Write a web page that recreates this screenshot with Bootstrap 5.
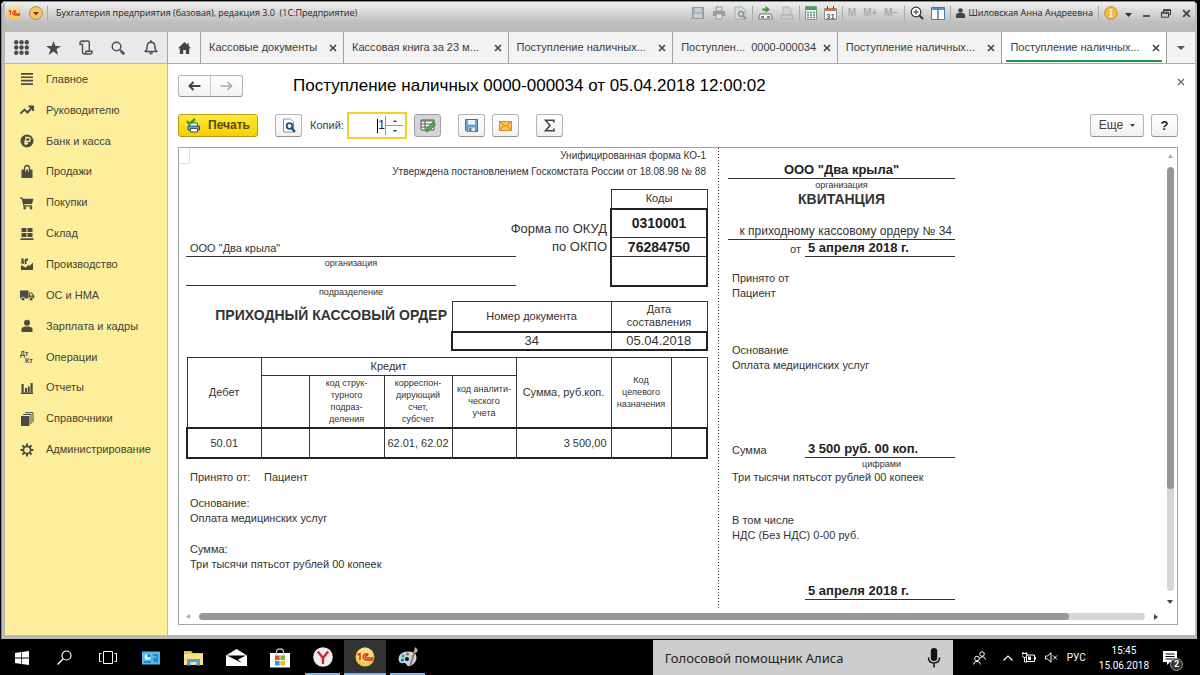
<!DOCTYPE html>
<html lang="ru">
<head>
<meta charset="utf-8">
<meta name="viewport" content="width=device-width, initial-scale=1">
<title>Поступление наличных 0000-000034</title>
<link href="https://cdn.jsdelivr.net/npm/bootstrap@5.3.0/dist/css/bootstrap.min.css" rel="stylesheet">
<style>
  body { background: #000; font-family: "Liberation Sans", Arial, sans-serif; font-size: 11px; line-height: 15px; color: #3c3c3c; }
  button, input, a { font: inherit; color: inherit; text-decoration: none; }
  a:hover { color: inherit; }
  svg { display: block; flex: none; }
  .desktop { height: 100vh; overflow: hidden; }
  .shrinkable { min-width: 0; min-height: 0; }

  /* window */
  .app-window { margin: 1px 3px 1px 1px; border-radius: 5px 5px 0 0; background: #b9b9b9; padding: 0 2px 4px 4px; box-shadow: inset 0 1px #8f8688, inset 0 2px #f4f4f4, inset 1px 0 #8d8d8d; }
  .titlebar { height: 30px; margin: 1px 0 0; padding: 0 4px 8px 2px; background: linear-gradient(#efefef, #d6d6d6 35%, #bebebe 70%, #b6b8b7); font: 9px/14px "Open Sans", sans-serif; color: #222; border-radius: 4px 4px 0 0; }
  .title-tools { gap: 7px; }
  .title-tools .tool-sep { margin: 0 -2px; }
  .plain-btn { border: 0; background: none; padding: 0; display: flex; align-items: center; justify-content: center; }
  .tool-sep { width: 1px; height: 14px; background: #aaa; }
  .mem { color: #a9a9a9; font: bold 10px/14px "Liberation Sans", sans-serif; }

  /* quick panel and tabs */
  .side-w { width: 163px; flex: none; }
  .quick { background: #e9e9e9; height: 32px; border-right: 1px solid #a5a5a5; border-bottom: 1px solid #b5b5b5; }
  .quick .plain-btn { flex: 1; }
  .tab-strip { background: #f3f3f3; height: 32px; border-bottom: 1px solid #a9a9a9; }
  .tab-home { width: 33px; border-right: 1px solid #a0a0a0; }
  .doc-tab { flex: 1 1 0; min-width: 0; border-right: 1px solid #a0a0a0; padding: 0 6px 0 8px; position: relative; white-space: nowrap; }
  .doc-tab.first { flex: 0 0 143px; }
  .doc-tab.current { background: #fff; }
  .doc-tab.current::after { content: ""; position: absolute; left: 4px; right: 4px; bottom: 1px; height: 2px; background: #199a4d; }
  .tab-more { width: 28px; }

  /* sections */
  .sections { background: #fdee9c; border-right: 1px solid #d9c445; }
  .section-list { display: grid; grid-auto-rows: 1fr; height: 401px; }
  .sections a { padding-left: 14px; gap: 11px; display: flex; align-items: center; color: #444236; }
  .sections svg { width: 16px; height: 16px; fill: #4b4a44; }
  .work { background: #fff; padding: 0 17px 10px 10px; min-width: 0; }
  .title-row { padding-top: 11px; }
  .close-form { margin: 0 -7px 8px 0; }
  .commands { padding: 15px 0 8px; }

  .cmd { height: 23px; border: 1px solid #b4b4b4; border-bottom-color: #8e8e8e; border-radius: 3px; background: linear-gradient(#fff, #f1f1f1); padding: 0; display: flex; align-items: center; justify-content: center; }
  .icon-cmd { width: 27px; }
  .apart { margin-left: 17px; }
  .near { margin-left: 7px; }
  .cmd.pressed { background: #d5d5d5; border-color: #a0a0a0; }
  .cmd.print { width: 80px; border-color: #b99b12; background: linear-gradient(#ffe93b, #f5d000); gap: 7px; font-size: 12px; font-weight: bold; color: #5a4b10; }
  .cmd.more { width: 54px; gap: 7px; font-size: 12px; }
  .cmd.help { font-size: 13px; font-weight: bold; color: #222; }
  .nav-pair { height: 22px; width: 65px; }
  .nav-pair button { flex: 1; }
  .nav-pair button + button { border-left: 1px solid #c9c9c9; height: 20px; }
  .doc-title { font-size: 17px; line-height: 22px; color: #000; margin: 0; font-weight: 400; padding-left: 50px; }
  .copies-label { margin: 0 1px 0 8px; width: 36px; }
  .copies { width: 60px; height: 27px; border: 2px solid #f2cd2b; background: #fff; position: relative; }
  .copies input { width: 36px; border: 0; padding: 0; text-align: right; outline: 0; color: #222; font-size: 12px; }
  .copies .caret { position: absolute; left: 28px; top: 5px; width: 1px; height: 14px; background: #000; }
  .spin { width: 18px; border-left: 1px solid #999; margin: 2px 0; }
  .spin button { flex: 1; }
  .spin button + button { border-top: 1px solid #999; }

  /* print form */
  .viewer { border: 1px solid #a3a3a3; background: #fff; display: grid; grid-template-columns: 1fr 14px; grid-template-rows: 1fr 15px; min-height: 0; position: relative; }
  .sheet { overflow: hidden; min-height: 0; color: #333; }
  .form-part { width: 539px; flex: none; padding: 0 10px 0 7px; }
  .cut { width: 1px; margin-bottom: 1px; background: repeating-linear-gradient(#333 0 1px, #fff 1px 3px); }
  .receipt { width: 236px; flex: none; padding-left: 9px; }
  .head-note { font-size: 10px; text-align: right; padding-right: 2px; }
  .head-note.decree { line-height: 17px; margin-bottom: 9px; }
  .org-block { width: 330px; flex: none; padding-top: 52px; }
  .form-codes { width: 94px; padding: 31px 3px 0 0; font-size: 13px; line-height: 18px; white-space: nowrap; }
  .order-title { font-size: 14px; line-height: 28px; padding-right: 4px; font-weight: bold; }
  .tiny { font-size: 9px; line-height: 12px; text-align: center; }
  .line-b { border-bottom: 1px solid #333; }
  .blank-line { height: 17px; }
  .sheet table { border-collapse: collapse; table-layout: fixed; color: #333; flex: none; }
  .sheet td, .sheet th { border: 1px solid #333; padding: 0; text-align: center; font-weight: 400; vertical-align: middle; }
  .sheet tbody.filled { border: 2px solid #222; }
  .codes { width: 98px; }
  .codes .filled td { font-size: 14px; font-weight: bold; color: #222; }
  .numbers { width: 257px; }
  .numbers .filled td { font-size: 13px; line-height: 15px; }
  .numbers th, .entries th { line-height: 13px; }
  .entries { width: 522px; margin-top: 6px; }
  .sheet .sub { font-size: 9px; line-height: 12px; }
  .r18 { height: 18px; } .r19 { height: 19px; } .r29 { height: 29px; } .r30 { height: 30px; } .r53 { height: 53px; }
  .bold13 { font-size: 13px; font-weight: bold; line-height: 16px; color: #222; }
  .receipt-title { font-size: 14px; line-height: 16px; font-weight: bold; text-align: center; }
  .rcp-pad { padding-left: 4px; }
  .from-label { width: 74px; }
  .val { width: 150px; padding-left: 3px; }
  .gap-3px { margin-top: 3px; } .gap-11 { margin-top: 11px; } .gap-14 { margin-top: 14px; } .gap-16 { margin-top: 16px; } .gap-28 { margin-top: 28px; } .gap-40 { margin-top: 40px; } .gap-42 { margin-top: 42px; } .gap-68 { margin-top: 68px; }
  .order-ref { font-size: 12px; line-height: 16px; padding-right: 3px; text-align: right; }
  .corner { position: absolute; left: 0; top: 0; width: 11px; height: 16px; border: solid #ddd; border-width: 0 1px 1px 0; }

  .bar { background: #d6d6d6; border-radius: 4px; overflow: hidden; display: flex; }
  .bar i { background: #979797; border-radius: 4px; }
  .vscroll { padding: 6px 0 5px; gap: 9px; }
  .hscroll { padding: 0 5px 0 7px; gap: 9px; }
  .vbar { width: 7px; flex-direction: column; }
  .hbar { height: 7px; }

  /* taskbar */
  .taskbar { height: 35px; color: #fff; font: 10px/15px Roboto, sans-serif; }
  .taskbar .plain-btn { width: 43px; height: 35px; }
  .taskbar .open { border-bottom: 2px solid #76b9ed; width: 35px; margin: 0 4px; }
  .taskbar .open.active { background: #333; width: 42px; margin: 0; }
  .voice { width: 300px; background: #cdcdcd; color: #222; padding: 0 12px; font: 13px/18px "Noto Sans", sans-serif; }
  .voice input { border: 0; background: none; padding: 0; color: #222; width: 220px; outline: 0; }
  .voice input::placeholder { color: #222; opacity: 1; }
  .tray { padding: 0 20px; gap: 9px; }
  .tray .plain-btn { width: auto; }
  .stack { position: relative; margin: 0 3px 0 5px; }
  .count { position: absolute; left: 7px; top: 7px; width: 13px; height: 13px; border-radius: 50%; background: #333; border: 1px solid #999; font: bold 9px/11px Roboto, sans-serif; text-align: center; }
</style>
</head>
<body>
<svg width="0" height="0" class="position-absolute" aria-hidden="true">
  <symbol id="x" viewBox="0 0 8 8"><path d="M1 1l6 6M7 1L1 7" stroke="#444" stroke-width="1.6" fill="none"/></symbol>
  <symbol id="one-c" viewBox="0 0 20 20"><circle cx="10" cy="10" r="9.5" fill="#fbc64a"/><circle cx="10" cy="8" r="7.5" fill="#fde08a"/><path d="M2.500 8L5 6.500V13M13.500 7.800A3.100 3.100 0 1 0 11 13H18.500M12.600 9.200A1.200 1.200 0 1 0 11.500 11H18.500" stroke="#d8321c" stroke-width="1.5" fill="none"/></symbol>
</svg>

<div class="desktop d-flex flex-column">
  <div class="app-window flex-grow-1 d-flex flex-column shrinkable">
    <header class="titlebar d-flex align-items-center">
      <svg width="14" height="14"><use href="#one-c"/></svg>
      <button class="plain-btn ms-2" aria-label="Меню"><svg width="14" height="14" viewBox="0 0 14 14"><circle cx="7" cy="7" r="6.4" fill="#f6c66a" stroke="#b98a3a"/><path d="M4 6h6L7 9.500z" fill="#6a3d10"/></svg></button>
      <span class="tool-sep ms-1 me-2"></span>
      <span class="flex-grow-1">Бухгалтерия предприятия (базовая), редакция 3.0&nbsp; (1С:Предприятие)</span>
      <div class="title-tools d-flex align-items-center">
        <button class="plain-btn" aria-label="Сохранить"><svg width="14" height="14" viewBox="0 0 14 14"><path d="M1.500 1.500h11v11h-11z" fill="#a9b3bb" stroke="#8e999f"/><path d="M4 2h6v4H4zM3 8h8v4H3z" fill="#c8cfd4"/></svg></button>
        <button class="plain-btn" aria-label="Печать"><svg width="14" height="14" viewBox="0 0 14 14"><path d="M4 1h6v4H4z" fill="#ddd" stroke="#999"/><path d="M1 5h12v5H1z" fill="#9a9fa3"/><path d="M4 8h6v5H4z" fill="#e4e4e4" stroke="#999"/></svg></button>
        <button class="plain-btn" aria-label="Просмотр"><svg width="14" height="14" viewBox="0 0 14 14"><path d="M2 1h7l3 3v9H2z" fill="#d5dadd" stroke="#a8aeb2"/><circle cx="8" cy="8" r="2.500" fill="none" stroke="#8693a0" stroke-width="1.500"/><path d="M10 10l3 3" stroke="#8693a0" stroke-width="2"/></svg></button>
        <span class="tool-sep"></span>
        <button class="plain-btn" aria-label="Ссылка"><svg width="15" height="14" viewBox="0 0 15 14"><path d="M4.500 2.500h3V0l4.500 3.500L7.500 7V4.800h-3z" fill="#32a02c"/><path d="M2 8h11l1.500 5h-14z" fill="#f5f5f5" stroke="#777"/><path d="M3 11h3M9 11h3" stroke="#555" stroke-width="1.500"/></svg></button>
        <button class="plain-btn" aria-label="Перейти"><svg width="14" height="14" viewBox="0 0 14 14"><path d="M3 1h6l2 2v6H3z" fill="#d0d4d7" stroke="#b2b7ba"/><path d="M1 9h12v4H1z" fill="#c8cccf" stroke="#aaafb2"/></svg></button>
        <span class="tool-sep"></span>
        <button class="plain-btn" aria-label="Калькулятор"><svg width="12" height="14" viewBox="0 0 12 14"><path d="M.5.5h11v13H.5z" fill="#f4f4f4" stroke="#7d9a7f"/><path d="M1 1h10v3H1z" fill="#3fa55a"/><path d="M2 6.500h8M2 9h8M2 11.500h8" stroke="#5b8c75" stroke-width="1.500" stroke-dasharray="2 1"/></svg></button>
        <button class="plain-btn" aria-label="Календарь"><svg width="13" height="14" viewBox="0 0 13 14"><path d="M.5 2.500h12v11H.5z" fill="#fff" stroke="#8b8b8b"/><path d="M1 2h11v3H1z" fill="#c77a50"/><path d="M3.500 0v3M9.500 0v3" stroke="#555"/><text x="2" y="12.500" font-size="8" font-family="Liberation Sans" font-weight="bold" fill="#46607b">31</text></svg></button>
        <span class="tool-sep"></span>
        <button class="plain-btn mem">M</button><button class="plain-btn mem">M+</button><button class="plain-btn mem">M−</button>
        <span class="tool-sep"></span>
        <button class="plain-btn" aria-label="Масштаб"><svg width="14" height="14" viewBox="0 0 14 14"><circle cx="6" cy="6" r="4.800" fill="#fff" stroke="#333" stroke-width="1.200"/><path d="M3.500 6h5M6 3.500v5" stroke="#333"/><path d="M9.500 9.500L13 13" stroke="#333" stroke-width="2"/></svg></button>
        <button class="plain-btn" aria-label="Панели"><svg width="14" height="13" viewBox="0 0 14 13"><path d="M.5.5h13v12H.5z" fill="#fff" stroke="#3b7fb5"/><path d="M1 1h12v2H1z" fill="#4a9bd8"/><path d="M7 1v12" stroke="#3b7fb5" stroke-width="1.500"/></svg></button>
        <span class="tool-sep"></span>
        <a href="#" class="d-flex align-items-center gap-1"><svg width="9" height="10" viewBox="0 0 9 10"><circle cx="4.500" cy="2.500" r="2.300" fill="#444"/><path d="M0 10V7q0-2 2.500-2h4Q9 5 9 7v3z" fill="#444"/></svg>Шиловская Анна Андреевна</a>
        <span class="tool-sep"></span>
        <button class="plain-btn" aria-label="Справка"><svg width="14" height="14" viewBox="0 0 14 14"><circle cx="7" cy="7" r="6.300" fill="#f9b93c" stroke="#c98a25"/><path d="M7 3v2M5.500 6.500H7v4M5.500 10.500h3" stroke="#fff" stroke-width="1.600" fill="none"/></svg></button>
        <button class="plain-btn pt-1" aria-label="Ещё"><svg width="7" height="4" viewBox="0 0 7 4"><path d="M0 0h7L3.500 4z" fill="#333"/></svg></button>
        <button class="plain-btn ms-1" aria-label="Свернуть"><svg width="7" height="10" viewBox="0 0 7 10"><path d="M0 8h7" stroke="#333" stroke-width="1.600"/></svg></button>
        <button class="plain-btn ms-1" aria-label="Развернуть"><svg width="10" height="9" viewBox="0 0 10 9"><path d="M2.500 3V.7h7v5H7.500M.5 3.200h7v5h-7zM.5 4.300h7M2.500 1.500h7" fill="none" stroke="#333"/></svg></button>
        <button class="plain-btn ms-1" aria-label="Закрыть"><svg width="9" height="9"><use href="#x"/></svg></button>
      </div>
    </header>

    <div class="d-flex">
      <div class="quick side-w d-flex">
        <button class="plain-btn" aria-label="Функции"><svg width="15" height="15" viewBox="0 0 15 15" fill="#4c4c4c"><circle cx="2.200" cy="2.200" r="2.200"/><circle cx="7.500" cy="2.200" r="2.200"/><circle cx="12.800" cy="2.200" r="2.200"/><circle cx="2.200" cy="7.500" r="2.200"/><circle cx="7.500" cy="7.500" r="2.200"/><circle cx="12.800" cy="7.500" r="2.200"/><circle cx="2.200" cy="12.800" r="2.200"/><circle cx="7.500" cy="12.800" r="2.200"/><circle cx="12.800" cy="12.800" r="2.200"/></svg></button>
        <button class="plain-btn" aria-label="Избранное"><svg width="15" height="14" viewBox="0 0 15 14"><path d="M7.500 0l1.900 5H15l-4.500 3.300L12.200 14 7.500 10.600 2.800 14l1.700-5.700L0 5h5.600z" fill="#4c4c4c"/></svg></button>
        <button class="plain-btn" aria-label="История"><svg width="14" height="15" viewBox="0 0 14 15"><path d="M3.500 4V12q0 2 2 2H11q2 0 2-2v-.7H7V12.500Q7 14 5.500 14M3.500 4.300H1V2.800Q1 1 3 1H8.500Q10.300 1 10.300 3V11M3 1q1.500 0 1.500 1.500" fill="none" stroke="#4c4c4c" stroke-width="1.400"/></svg></button>
        <button class="plain-btn" aria-label="Поиск"><svg width="14" height="14" viewBox="0 0 14 14"><circle cx="5.500" cy="5.500" r="4.300" fill="none" stroke="#4c4c4c" stroke-width="1.400"/><path d="M8.800 8.800l1.500 1.500" stroke="#4c4c4c" stroke-width="1.500"/><path d="M10 10l3.200 3.200" stroke="#4c4c4c" stroke-width="2.600"/></svg></button>
        <button class="plain-btn" aria-label="Оповещения"><svg width="14" height="15" viewBox="0 0 14 15"><path d="M1 11.500q2.200-1.500 2.200-5.500Q3.400 2.300 7 2.300T10.800 6q0 4 2.200 5.500z" fill="none" stroke="#4c4c4c" stroke-width="1.400" stroke-linejoin="round"/><path d="M7 .3v2" stroke="#4c4c4c" stroke-width="1.600"/><path d="M5 12.500h4Q8.700 14.500 7 14.500T5 12.500z" fill="#4c4c4c"/></svg></button>
      </div>
      <nav class="tab-strip d-flex flex-grow-1 shrinkable">
        <button class="plain-btn tab-home" aria-label="Начальная страница"><svg width="13" height="12" viewBox="0 0 13 12"><path d="M6.500 0L0 6.200h1.800V12h3.400V8h2.600v4h3.400V6.200H13l-2.200-2.100V1.200H9.300v1.500z" fill="#444"/></svg></button>
        <div class="doc-tab first d-flex align-items-center justify-content-between"><a href="#">Кассовые документы</a><button class="plain-btn" aria-label="Закрыть"><svg width="8" height="8"><use href="#x"/></svg></button></div>
        <div class="doc-tab d-flex align-items-center justify-content-between"><a href="#">Кассовая книга за 23 м...</a><button class="plain-btn" aria-label="Закрыть"><svg width="8" height="8"><use href="#x"/></svg></button></div>
        <div class="doc-tab d-flex align-items-center justify-content-between"><a href="#">Поступление наличных...</a><button class="plain-btn" aria-label="Закрыть"><svg width="8" height="8"><use href="#x"/></svg></button></div>
        <div class="doc-tab d-flex align-items-center justify-content-between"><a href="#">Поступлен...&nbsp; 0000-000034</a><button class="plain-btn" aria-label="Закрыть"><svg width="8" height="8"><use href="#x"/></svg></button></div>
        <div class="doc-tab d-flex align-items-center justify-content-between"><a href="#">Поступление наличных...</a><button class="plain-btn" aria-label="Закрыть"><svg width="8" height="8"><use href="#x"/></svg></button></div>
        <div class="doc-tab current d-flex align-items-center justify-content-between"><a href="#" aria-current="page">Поступление наличных...</a><button class="plain-btn" aria-label="Закрыть"><svg width="8" height="8"><use href="#x"/></svg></button></div>
        <button class="plain-btn tab-more" aria-label="Все вкладки"><svg width="8" height="4" viewBox="0 0 8 4"><path d="M0 0h8L4 4z" fill="#555"/></svg></button>
      </nav>
    </div>

    <div class="d-flex flex-grow-1 shrinkable">
      <nav class="sections side-w">
        <div class="section-list">
        <a href="#"><svg viewBox="0 0 16 16"><path d="M2 2h12v1.700H2zM2 5.400h12v1.700H2zM2 8.800h12v1.700H2zM2 12.200h12v1.700H2z"/></svg>Главное</a>
        <a href="#"><svg viewBox="0 0 16 16"><path d="M1.500 11.500l4-4 3 3L13 5.500M9.500 4.500H14V9" fill="none" stroke="#4b4a44" stroke-width="1.900"/></svg>Руководителю</a>
        <a href="#"><svg viewBox="0 0 16 16"><circle cx="8" cy="8" r="6.500"/><path d="M6.800 12.300V4.500h2.400q2 0 2 2t-2 2H5.200M5.200 10.500h4" fill="none" stroke="#fdee9c" stroke-width="1.300"/></svg>Банк и касса</a>
        <a href="#"><svg viewBox="0 0 16 16"><path d="M2.500 5.500h11V14h-11z"/><path d="M5.500 7.500V4q0-2.500 2.500-2.500T10.500 4v3.500" fill="none" stroke="#4b4a44" stroke-width="1.300"/><path d="M6.600 5.500V7.500M9.400 5.500V7.500" stroke="#fdee9c"/></svg>Продажи</a>
        <a href="#"><svg viewBox="0 0 16 16"><path d="M1 2.500h2.500l.4 1.300H14.500L13 9H5.300l.3 1.200H13v1.300H4.500L2.700 3.800H1z"/><circle cx="5.700" cy="13" r="1.400"/><circle cx="12" cy="13" r="1.400"/></svg>Покупки</a>
        <a href="#"><svg viewBox="0 0 16 16"><path d="M2.500 2h5v4h-5zM8.500 2h5v4h-5zM2.500 7h5v4h-5zM8.500 7h5v4h-5zM1.500 12.300h13V14h-13z"/></svg>Склад</a>
        <a href="#"><svg viewBox="0 0 16 16"><path d="M2 14V9l4.500 2.500L10 8.500v2l4-4V14zM2.300 7.800L2.500 2.500h2L5 7.800zM5.800 8.500L5.500 4Q6 2 9 2.500v2L7.500 5v3z"/></svg>Производство</a>
        <a href="#"><svg viewBox="0 0 16 16"><path d="M1 3.500h8.500v8H1zM10 5.500h3l2.200 3v3H10zM11 6.500v2h3L12.600 6.500z" fill-rule="evenodd"/><circle cx="4" cy="12" r="1.900" stroke="#fdee9c" stroke-width=".8"/><circle cx="12.200" cy="12" r="1.900" stroke="#fdee9c" stroke-width=".8"/></svg>ОС и НМА</a>
        <a href="#"><svg viewBox="0 0 16 16"><circle cx="8" cy="4.700" r="3"/><path d="M2.500 14v-2.500q0-2.500 3.500-3h4q3.500.5 3.500 3V14z"/></svg>Зарплата и кадры</a>
        <a href="#"><svg viewBox="0 0 16 16" font-family="Liberation Sans" font-weight="bold" font-size="7"><text x="1" y="7">Дт</text><text x="6" y="14">Кт</text></svg>Операции</a>
        <a href="#"><svg viewBox="0 0 16 16"><path d="M2 12.300h12V14H2zM2.500 4h2.200v8H2.500zM6 8h2v4H6zM8.800 6.500h2V12h-2zM11.500 3h2.200v9h-2.200z"/></svg>Отчеты</a>
        <a href="#"><svg viewBox="0 0 16 16"><path d="M2 5h8.500v10H2z"/><path d="M4 3.500h8V13M6 1.700h8V11.500" fill="none" stroke="#4b4a44" stroke-width="1"/></svg>Справочники</a>
        <a href="#"><svg viewBox="0 0 16 16"><circle cx="8" cy="8" r="3.600" fill="none" stroke="#4b4a44" stroke-width="1.700"/><path d="M8 1.500v3M8 11.500v3M1.500 8h3M11.500 8h3M3.400 3.400l2 2M10.600 10.600l2 2M12.600 3.400l-2 2M5.400 10.600l-2 2" stroke="#4b4a44" stroke-width="1.900"/></svg>Администрирование</a>
        </div>
      </nav>

      <main class="work flex-grow-1 d-flex flex-column">
        <div class="title-row d-flex align-items-center">
          <div class="cmd nav-pair">
            <button class="plain-btn" aria-label="Назад"><svg width="13" height="10" viewBox="0 0 13 10"><path d="M1.500 5H12.500M5.500 1L1.500 5l4 4" fill="none" stroke="#444" stroke-width="2"/></svg></button>
            <button class="plain-btn" aria-label="Вперёд"><svg width="13" height="10" viewBox="0 0 13 10"><path d="M.5 5H11.500M7.500 1l4 4-4 4" fill="none" stroke="#aaa" stroke-width="1.700"/></svg></button>
          </div>
          <h1 class="doc-title flex-grow-1">Поступление наличных 0000-000034 от 05.04.2018 12:00:02</h1>
          <button class="plain-btn close-form" aria-label="Закрыть"><svg width="8" height="8" viewBox="0 0 8 8"><path d="M1 1l6 6M7 1L1 7" stroke="#666" stroke-width="1.200"/></svg></button>
        </div>

        <div class="commands d-flex align-items-center">
          <button class="cmd print"><svg width="15" height="15" viewBox="0 0 15 15"><path d="M3.500 5h8v4h-8z" fill="#fff" stroke="#456"/><path d="M2 8h11.500v4H2z" fill="#6fa4cf" stroke="#2f5574"/><path d="M4.500 10.500h7v3.500h-7z" fill="#fff" stroke="#456"/><path d="M1 3l2.500 3L9 1" fill="none" stroke="#2f9e2a" stroke-width="2.400"/></svg>Печать</button>
          <button class="cmd icon-cmd apart" aria-label="Предварительный просмотр"><svg width="14" height="15" viewBox="0 0 14 15"><path d="M1.500 1h7l3 3v10h-10z" fill="#fff" stroke="#7899b5"/><circle cx="7.500" cy="8" r="2.800" fill="#fff" stroke="#1c4f7c" stroke-width="1.800"/><path d="M9.500 10l3.500 4" stroke="#1c4f7c" stroke-width="2.400"/></svg></button>
          <label for="copies" class="copies-label">Копий:</label>
          <div class="copies d-flex">
            <input id="copies" type="text" value="1"><span class="caret"></span>
            <div class="spin d-flex flex-column"><button class="plain-btn" aria-label="Больше"><svg width="4" height="2" viewBox="0 0 4 2"><path d="M0 2h4L2 0z" fill="#333"/></svg></button><button class="plain-btn" aria-label="Меньше"><svg width="4" height="2" viewBox="0 0 4 2"><path d="M0 0h4L2 2z" fill="#333"/></svg></button></div>
          </div>
          <button class="cmd icon-cmd near pressed" aria-label="Редактирование"><svg width="16" height="14" viewBox="0 0 16 14"><path d="M1 1h13v10H1z" fill="#fff" stroke="#555"/><path d="M1 2h13M1 5h13M1 8h9M5 2v9" stroke="#555" fill="none"/><path d="M6 12.500l1-3.500 6-6 2.500 2.500-6 6z" fill="#57b04c" stroke="#2d6b2a" stroke-width=".8"/></svg></button>
          <button class="cmd icon-cmd apart" aria-label="Сохранить"><svg width="13" height="13" viewBox="0 0 13 13"><path d="M.5.5h12v12H2l-1.500-1.500z" fill="#6ea6d8" stroke="#3c6fa0"/><path d="M3 1h7v4.500H3z" fill="#eef5fb"/><path d="M3 8h7.500v4.500H3z" fill="#e4e4e4" stroke="#3c6fa0" stroke-width=".6"/><path d="M4.300 9h2v3h-2z" fill="#3c6fa0"/></svg></button>
          <button class="cmd icon-cmd near" aria-label="Отправить"><svg width="13" height="10" viewBox="0 0 13 10"><path d="M.5.5h12v9H.5z" fill="#fcc552" stroke="#d68b25"/><path d="M.5.5l6 5 6-5M.5 9.500l4.300-5M12.500 9.500l-4.300-5" fill="none" stroke="#c97c1d"/></svg></button>
          <button class="cmd icon-cmd apart" aria-label="Сумма"><svg width="11" height="13" viewBox="0 0 11 13"><path d="M9.800 3.500V1.200H1.500L6 6.500 1.500 11.800H10V9.500" fill="none" stroke="#444" stroke-width="1.600"/></svg></button>
          <button class="cmd more ms-auto">Еще <svg width="5" height="3" viewBox="0 0 5 3"><path d="M0 0h5L2.500 3z" fill="#444"/></svg></button>
          <button class="cmd icon-cmd help near">?</button>
        </div>

        <div class="viewer flex-grow-1">
          <span class="corner"></span>
          <div class="sheet d-flex">
            <section class="form-part">
              <div class="head-note">Унифицированная форма КО-1</div>
              <div class="head-note decree">Утверждена постановлением Госкомстата России от 18.08.98 № 88</div>
              <div class="d-flex">
                <div class="org-block">
                  <div class="line-b rcp-pad">ООО "Два крыла"</div>
                  <div class="tiny">организация</div>
                  <div class="line-b blank-line"></div>
                  <div class="tiny">подразделение</div>
                </div>
                <div class="form-codes d-flex flex-column align-items-end flex-shrink-0"><span>Форма по ОКУД</span><span>по ОКПО</span></div>
                <table class="codes align-self-start">
                  <thead><tr class="r19"><th>Коды</th></tr></thead>
                  <tbody class="filled"><tr class="r29"><td>0310001</td></tr><tr class="r19"><td>76284750</td></tr><tr class="r29"><td></td></tr></tbody>
                </table>
              </div>
              <div class="d-flex gap-3px">
                <div class="order-title flex-grow-1 text-end">ПРИХОДНЫЙ КАССОВЫЙ ОРДЕР</div>
                <table class="numbers">
                  <colgroup><col style="width:159px"><col></colgroup>
                  <thead><tr class="r30"><th>Номер документа</th><th>Дата<br>составления</th></tr></thead>
                  <tbody class="filled"><tr class="r18"><td>34</td><td>05.04.2018</td></tr></tbody>
                </table>
              </div>
              <table class="entries">
                <colgroup><col style="width:74px"><col style="width:48px"><col style="width:75px"><col style="width:68px"><col style="width:64px"><col style="width:95px"><col style="width:60px"><col></colgroup>
                <thead>
                  <tr class="r18"><th rowspan="2">Дебет</th><th colspan="4">Кредит</th><th rowspan="2">Сумма, руб.коп.</th><th rowspan="2" class="sub">Код<br>целевого<br>назначения</th><th rowspan="2"></th></tr>
                  <tr class="r53"><th></th><th class="sub">код струк-<br>турного<br>подраз-<br>деления</th><th class="sub">корреспон-<br>дирующий<br>счет,<br>субсчет</th><th class="sub">код аналити-<br>ческого<br>учета</th></tr>
                </thead>
                <tbody class="filled"><tr class="r30"><td>50.01</td><td></td><td></td><td class="text-nowrap">62.01, 62.02</td><td></td><td class="text-end pe-1">3 500,00</td><td></td><td></td></tr></tbody>
              </table>
              <div class="rcp-pad">
                <div class="d-flex gap-11"><span class="from-label">Принято от:</span><span>Пациент</span></div>
                <div class="gap-11">Основание:<br>Оплата медицинских услуг</div>
                <div class="gap-16">Сумма:<br>Три тысячи пятьсот рублей 00 копеек</div>
              </div>
            </section>
            <div class="cut"></div>
            <section class="receipt">
              <div class="line-b bold13 text-center gap-14">ООО "Два крыла"</div>
              <div class="tiny">организация</div>
              <div class="receipt-title">КВИТАНЦИЯ</div>
              <div class="line-b order-ref gap-16">к приходному кассовому ордеру № 34</div>
              <div class="d-flex justify-content-end align-items-end"><span class="me-1">от</span><span class="val line-b bold13">5 апреля 2018 г.</span></div>
              <div class="rcp-pad gap-14">Принято от<br>Пациент</div>
              <div class="rcp-pad gap-42">Основание<br>Оплата медицинских услуг</div>
              <div class="d-flex justify-content-between align-items-end rcp-pad gap-68"><span>Сумма</span><span class="val line-b bold13">3 500 руб. 00 коп.</span></div>
              <div class="tiny val ms-auto">цифрами</div>
              <div class="rcp-pad">Три тысячи пятьсот рублей 00 копеек</div>
              <div class="rcp-pad gap-28">В том числе<br>НДС (Без НДС) 0-00 руб.</div>
              <div class="val line-b bold13 ms-auto gap-40">5 апреля 2018 г.</div>
            </section>
          </div>
          <div class="vscroll d-flex flex-column align-items-center">
            <svg width="5" height="4" viewBox="0 0 5 4"><path d="M0 4h5L2.500 0z" fill="#aaa"/></svg>
            <div class="bar vbar flex-grow-1"><i style="height:76%"></i></div>
            <svg width="6" height="4" viewBox="0 0 6 4"><path d="M0 0h6L3 4z" fill="#444"/></svg>
          </div>
          <div class="hscroll d-flex align-items-center">
            <svg width="4" height="5" viewBox="0 0 4 5"><path d="M4 0v5L0 2.500z" fill="#aaa"/></svg>
            <div class="bar hbar flex-grow-1"><i style="width:92%"></i></div>
            <svg width="4" height="6" viewBox="0 0 4 6"><path d="M0 0v6l4-3z" fill="#444"/></svg>
          </div>
        </div>
      </main>
    </div>
  </div>

  <footer class="taskbar d-flex align-items-center">
    <button class="plain-btn" aria-label="Пуск"><svg width="14" height="14" viewBox="0 0 14 14" fill="#fff"><path d="M0 2l6-1v5.600H0zM6.700.9L14 0v6.600H6.700zM0 7.400h6V13l-6-1zM6.700 7.400H14V14l-7.300-1z"/></svg></button>
    <button class="plain-btn" aria-label="Поиск"><svg width="15" height="15" viewBox="0 0 15 15"><circle cx="9.500" cy="5.500" r="4.500" fill="none" stroke="#fff" stroke-width="1.200"/><path d="M6.200 8.800L.5 14.500" stroke="#fff" stroke-width="1.400"/></svg></button>
    <button class="plain-btn" aria-label="Представление задач"><svg width="18" height="13" viewBox="0 0 18 13"><path d="M4.500.5h9v12h-9zM2.500 2.500H.5v8h2M15.500 2.500h2v8h-2" fill="none" stroke="#fff"/></svg></button>
    <button class="plain-btn" aria-label="Панель управления"><svg width="18" height="14" viewBox="0 0 18 14"><path d="M0 .5h18v13H0z" fill="#57b8ea"/><circle cx="5.500" cy="6" r="3" fill="#d9f1fc"/><path d="M5.500 6V3a3 3 0 0 1 3 3z" fill="#1a6fb0"/><path d="M2 11h7M11 4h4v7M11 8h2v3" stroke="#1877bb" stroke-width="1.400" fill="none"/></svg></button>
    <button class="plain-btn" aria-label="Проводник"><svg width="19" height="16" viewBox="0 0 19 16"><path d="M0 1h7l2 2h10v12H0z" fill="#e8c058"/><path d="M0 4h19v11H0z" fill="#fbe08c"/><path d="M3 15.500V9h13v6.500h-3.500V12h-6v3.500z" fill="#4aa5d6"/></svg></button>
    <button class="plain-btn" aria-label="Почта"><svg width="21" height="17" viewBox="0 0 21 17"><path d="M0 6.500L10.500 0 21 6.500V17H0z" fill="#fff"/><path d="M1 6.500H20L12 10.500l4 3.500-5-2.500z" fill="#000"/></svg></button>
    <button class="plain-btn" aria-label="Магазин"><svg width="20" height="20" viewBox="0 0 20 20"><path d="M0 5h20v14.500H0z" fill="#fff"/><path d="M6.500 7V3.500Q6.500 1 10 1t3.500 2.500V7" fill="none" stroke="#bbb" stroke-width="1.300"/><path d="M5 7.500h4.600v4.600H5z" fill="#e74c28"/><path d="M10.400 7.500H15v4.600h-4.600z" fill="#7cb928"/><path d="M5 12.900h4.600v4.600H5z" fill="#2c9fe0"/><path d="M10.400 12.900H15v4.600h-4.600z" fill="#f9b813"/></svg></button>
    <button class="plain-btn open" aria-label="Яндекс Браузер"><svg width="20" height="20" viewBox="0 0 20 20"><circle cx="10" cy="10" r="9.800" fill="#ededed"/><path d="M4.800 4.500L10 11l5.200-6.500M10 10.500V17" fill="none" stroke="#d61f26" stroke-width="2.300"/></svg></button>
    <button class="plain-btn open active" aria-label="1С:Предприятие"><svg width="20" height="20"><use href="#one-c"/></svg></button>
    <button class="plain-btn open" aria-label="Paint"><svg width="20" height="20" viewBox="0 0 20 20"><path d="M.5 12Q1 5 9 4.500q9-.5 9.500 5.500.3 5-5 8.500-4 2-5-1-.5-2-3-1.500Q1 17 .5 12z" fill="#b9d9ec"/><circle cx="5" cy="9" r="1.500" fill="#3aa648"/><circle cx="9.500" cy="7" r="1.500" fill="#e64b32"/><circle cx="4.500" cy="13" r="1.500" fill="#2b5f9a"/><circle cx="9" cy="12" r="2" fill="#111"/><circle cx="14" cy="9" r="1.500" fill="#f3c331"/><path d="M12 19L17 4" stroke="#a86b36" stroke-width="1.700"/><path d="M16 5l1-5 3 3-2 3z" fill="#e3b185"/></svg></button>
    <div class="voice d-flex align-items-center justify-content-between align-self-stretch ms-auto">
      <input type="text" placeholder="Голосовой помощник Алиса" aria-label="Голосовой помощник">
      <svg width="14" height="20" viewBox="0 0 14 20"><rect x="3.800" y="0" width="6.400" height="13" rx="3.200" fill="#111"/><path d="M1.500 9.500Q1.500 15 7 15t5.500-5.500M7 15v4.500" fill="none" stroke="#111" stroke-width="1.500"/></svg>
    </div>
    <div class="tray d-flex align-items-center">
      <button class="plain-btn me-2" aria-label="Люди"><svg width="13" height="14" viewBox="0 0 13 14" fill="none" stroke="#fff"><circle cx="9" cy="3" r="2.300"/><path d="M6.500 8Q7 5.800 9.500 5.800T12.500 8.500"/><circle cx="4" cy="7.500" r="2.300"/><path d="M.5 13.500Q.8 10.300 4 10.300t3.500 3.200"/></svg></button>
      <button class="plain-btn" aria-label="Скрытые значки"><svg width="10" height="6" viewBox="0 0 10 6"><path d="M.5 5.500L5 1l4.500 4.500" fill="none" stroke="#fff" stroke-width="1.200"/></svg></button>
      <button class="plain-btn" aria-label="Питание"><svg width="14" height="11" viewBox="0 0 14 11"><path d="M4.500 3h8v6.500h-8zM13.500 5v2.500" fill="none" stroke="#fff"/><path d="M6 4.500h3V8H6z" fill="#fff"/><path d="M0 1.500h5v2L3.500 5.500h-2L0 3.500zM1 0v2M4 0v2M2.500 5v5H5" fill="none" stroke="#fff"/></svg></button>
      <button class="plain-btn" aria-label="Звук"><svg width="13" height="11" viewBox="0 0 13 11"><path d="M.5 4h2L6 .8v9.400L2.500 7h-2zM8 3.500l4 4M12 3.500l-4 4" fill="none" stroke="#fff"/></svg></button>
      <span>РУС</span>
      <span class="text-center ms-1">15:45<br>15.06.2018</span>
      <button class="plain-btn" aria-label="Уведомления"><span class="stack"><svg width="14" height="14" viewBox="0 0 14 14"><path d="M0 0h14v11H7l-3 3v-3H0z" fill="#fff"/><path d="M2.500 3h9M2.500 5.500h9M2.500 8h9" stroke="#000"/></svg><span class="count">2</span></span></button>
    </div>
  </footer>
</div>
<script src="https://cdn.jsdelivr.net/npm/bootstrap@5.3.0/dist/js/bootstrap.bundle.min.js"></script>
</body>
</html>
